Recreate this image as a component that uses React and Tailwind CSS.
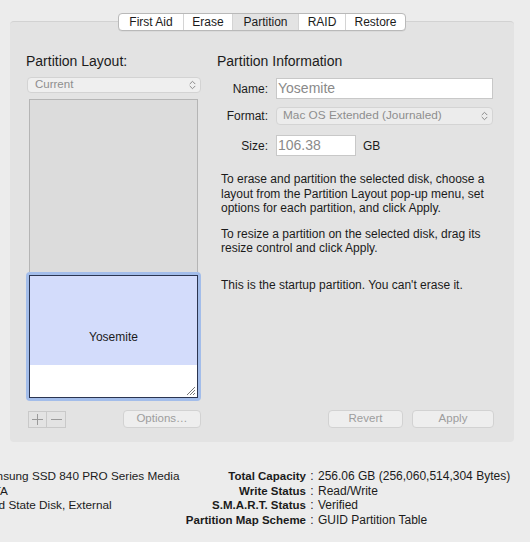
import React from "react";

const Chevrons = ({ color = "#8a8a8a" }) => (
  <svg width="7" height="10" viewBox="0 0 7 10" fill="none" stroke={color} strokeWidth="1" strokeLinecap="round" strokeLinejoin="round">
    <path d="M1 3.8 L3.5 1.3 L6 3.8" />
    <path d="M1 6.2 L3.5 8.7 L6 6.2" />
  </svg>
);

const Grip = () => (
  <svg width="10" height="10" viewBox="0 0 10 10" stroke="#555" strokeWidth="0.8">
    <path d="M9 1 L1 9" />
    <path d="M9 4 L4 9" />
    <path d="M9 7 L7 9" />
  </svg>
);

export default function App() {
  const font = { fontFamily: '"Liberation Sans", Arial, sans-serif' };
  return (
    <div className="w-[530px] h-[542px] bg-[#ececec] overflow-hidden text-[#1b1b1b] flex flex-col" style={font}>
      {/* Panel */}
      <div className="relative mt-[21px] ml-[10px] w-[504px] h-[421px] bg-[#e3e3e3] rounded-[4px] border-t border-[#d2d2d2] flex">
        {/* Tabs */}
        <div className="absolute left-[108px] -top-[9px] h-[18px] flex bg-white border border-[#b9b9b9] rounded-[4px] overflow-hidden text-[12px] leading-[16px] shadow-[0_0.5px_0_rgba(0,0,0,0.08)]">
          <div className="w-[65px] flex items-center justify-center border-r border-[#d4d4d4]">First Aid</div>
          <div className="w-[49px] flex items-center justify-center border-r border-[#d4d4d4]">Erase</div>
          <div className="w-[66px] flex items-center justify-center border-r border-[#d4d4d4] bg-[#e3e3e3]">Partition</div>
          <div className="w-[47px] flex items-center justify-center border-r border-[#d4d4d4]">RAID</div>
          <div className="flex-1 w-[59px] flex items-center justify-center">Restore</div>
        </div>

        {/* Left column */}
        <div className="ml-[16px] w-[175px] flex flex-col pt-[31px] pb-[14px]">
          <div className="text-[14px] leading-[16px]">Partition Layout:</div>
          <div className="mt-[8px] ml-[1px] w-[174px] h-[16px] bg-[#efefef] border border-[#d3d3d3] rounded-[4px] flex items-center justify-between pl-[7px] pr-[4px] text-[11.5px] text-[#8e8e8e]">
            <span>Current</span>
            <Chevrons />
          </div>
          <div className="mt-[6px] ml-[3px] w-[169px] h-[173px] bg-[#dcdcdc] border-x border-t border-[#b5b5b5]" />
          <div className="w-[175px] h-[129px] border-[3px] border-[#a3bdea] rounded-[4px]">
            <div className="w-full h-full border border-[#2b3550] flex flex-col">
              <div className="h-[89px] bg-[#d3dcfb] flex items-end justify-center text-[12px] leading-[14px] pb-[21px]">
                <span>Yosemite</span>
              </div>
              <div className="flex-1 bg-white flex items-end justify-end pr-[1px] pb-[1px]">
                <Grip />
              </div>
            </div>
          </div>
          <div className="mt-auto flex items-center justify-between">
            <div className="ml-[2px] flex h-[17px] border border-[#c9c9c9]">
              <div className="w-[18px] flex items-center justify-center border-r border-[#c9c9c9]">
                <svg width="11" height="11" viewBox="0 0 11 11" stroke="#9a9a9a" strokeWidth="1"><path d="M5.5 0 V11 M0 5.5 H11" /></svg>
              </div>
              <div className="w-[18px] flex items-center justify-center">
                <svg width="11" height="11" viewBox="0 0 11 11" stroke="#9a9a9a" strokeWidth="1"><path d="M0 5.5 H11" /></svg>
              </div>
            </div>
            <div className="w-[78px] h-[18px] bg-[#eeeeee] border border-[#d2d2d2] rounded-[4px] flex items-center justify-center text-[11.5px] text-[#9d9d9d]">Options…</div>
          </div>
        </div>

        {/* Right column */}
        <div className="ml-[16px] w-[277px] flex flex-col pt-[31px] pb-[14px]">
          <div className="text-[14px] leading-[16px]">Partition Information</div>
          <div className="mt-[9px] flex items-center h-[21px] gap-[8px]">
            <div className="w-[51px] text-right text-[12px]">Name:</div>
            <div className="w-[217px] h-[21px] bg-white border border-[#c8c8c8] flex items-center pl-[1px] text-[14px] text-[#8a8a8a]">Yosemite</div>
          </div>
          <div className="mt-[8px] flex items-center h-[18px] gap-[8px]">
            <div className="w-[51px] text-right text-[12px]">Format:</div>
            <div className="w-[217px] h-[18px] bg-[#ececec] border border-[#d4d4d4] rounded-[4px] flex items-center justify-between pl-[6px] pr-[4px] text-[11.8px] text-[#8e8e8e]">
              <span>Mac OS Extended (Journaled)</span>
              <Chevrons />
            </div>
          </div>
          <div className="mt-[10px] flex items-center h-[21px] gap-[8px]">
            <div className="w-[51px] text-right text-[12px]">Size:</div>
            <div className="w-[80px] h-[21px] bg-white border border-[#c8c8c8] flex items-center pl-[1px] text-[14px] text-[#8a8a8a]">106.38</div>
            <div className="ml-[-1px] text-[12px]">GB</div>
          </div>
          <p className="mt-[16px] ml-[4px] text-[12px] leading-[14.5px] w-[272px]">
            To erase and partition the selected disk, choose a layout from the Partition Layout pop-up menu, set options for each partition, and click Apply.
          </p>
          <p className="mt-[11px] ml-[4px] text-[12px] leading-[14.5px] w-[272px]">
            To resize a partition on the selected disk, drag its resize control and click Apply.
          </p>
          <p className="mt-[22px] ml-[4px] text-[12px] leading-[14.5px] w-[272px]">
            This is the startup partition. You can't erase it.
          </p>
          <div className="mt-auto flex justify-end gap-[9px]">
            <div className="w-[75px] h-[18px] bg-[#eeeeee] border border-[#d2d2d2] rounded-[4px] flex items-center justify-center text-[11.5px] text-[#9d9d9d]">Revert</div>
            <div className="w-[82px] h-[18px] bg-[#eeeeee] border border-[#d2d2d2] rounded-[4px] flex items-center justify-center text-[11.5px] text-[#9d9d9d]">Apply</div>
          </div>
        </div>
      </div>

      {/* Bottom info */}
      <div className="mt-[27px] flex text-[12px] leading-[14.5px]">
        <div className="ml-[-21px] w-[201px] flex flex-col whitespace-nowrap text-[11.75px]">
          <div>Samsung SSD 840 PRO Series Media</div>
          <div>SATA</div>
          <div>Solid State Disk, External</div>
        </div>
        <div className="flex flex-col whitespace-nowrap">
          {[
            ["Total Capacity", "256.06 GB (256,060,514,304 Bytes)"],
            ["Write Status", "Read/Write"],
            ["S.M.A.R.T. Status", "Verified"],
            ["Partition Map Scheme", "GUID Partition Table"],
          ].map(([k, v]) => (
            <div key={k} className="flex">
              <span className="w-[126px] text-right font-bold text-[11.5px]">{k}</span>
              <span className="w-[12px] text-center">:</span>
              <span>{v}</span>
            </div>
          ))}
        </div>
      </div>
    </div>
  );
}
